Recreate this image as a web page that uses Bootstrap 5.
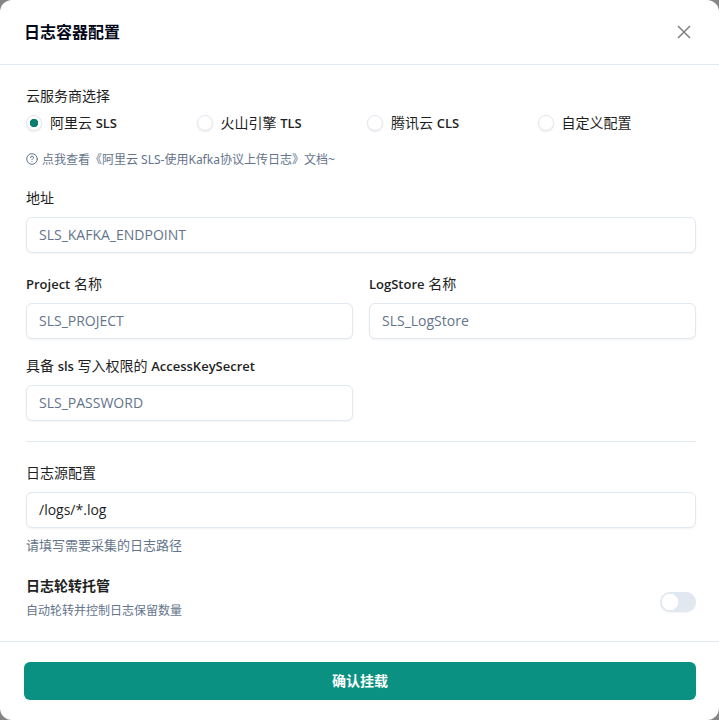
<!DOCTYPE html>
<html lang="zh-CN">
<head>
<meta charset="utf-8">
<meta name="viewport" content="width=device-width, initial-scale=1">
<title>日志容器配置</title>
<link href="https://cdn.jsdelivr.net/npm/bootstrap@5.3.0/dist/css/bootstrap.min.css" rel="stylesheet">
<style>
  :root { --line: #e2e8f0; --muted: #64748b; --brand: #0a9181; }
  body { background: #858585; color: #1f1f1f; font-family: "Noto Sans", "Noto Sans CJK SC", sans-serif; font-size: 14px; line-height: 20px; }
  .dialog-panel { background: #fff; border-radius: 12px; min-height: 100vh; }
  .dialog-head { padding: 20px 23px 20px 24px; border-bottom: 1px solid var(--line); }
  .dialog-title { font-size: 16px; line-height: 24px; color: #020817; }
  .close-btn { width: 24px; height: 24px; color: #808080; }
  .dialog-main { padding: 21px 23px 21px 26px; }
  .dialog-foot { padding: 20px 23px 20px 24px; border-top: 1px solid var(--line); }
  .field-label { display: block; margin-bottom: 9px; line-height: 20px; }
  .latin { font-family: "Open Sans", sans-serif; font-size: 13px; font-weight: 600; }
  .form-control { height: 36px; padding: 0 12px 2px; font-family: "Open Sans", "Noto Sans CJK SC", sans-serif; font-size: 14px; line-height: 20px; color: #1f1f1f; border-color: var(--line); border-radius: 6px; box-shadow: 0 1px 2px rgba(0,0,0,.05); }
  .form-control::placeholder { color: var(--muted); }
  .provider-row { display: grid; grid-template-columns: repeat(4, 1fr); gap: 12px; margin-top: 7px; }
  .form-check-input.provider { width: 16px; height: 16px; margin: 0; border-color: var(--line); background-color: #fff; box-shadow: 0 1px 2px rgba(0,0,0,.08); }
  .form-check-input.provider:checked { background-image: radial-gradient(circle, #0a7d70 0 4px, transparent 4.5px); border-color: var(--line); }
  .doc-link { color: var(--muted); font-size: 12px; line-height: 16px; margin: 19px 0 20px; }
  .doc-link svg { margin-bottom: 2px; }
  .field-grid { display: grid; grid-template-columns: 1fr 1fr; gap: 17px 16px; margin-top: 21px; }
  .divider { margin: 20px 0 21px; border-top: 1px solid var(--line); opacity: 1; }
  .help-text { color: var(--muted); font-size: 13px; line-height: 20px; margin-top: 7px; }
  .rotate-row { margin-top: 21px; }
  .rotate-note { color: var(--muted); font-size: 12px; line-height: 16px; margin-top: 7px; }
  .form-switch .form-check-input { width: 36px; height: 20px; margin: 0; border: 0; background-color: var(--line); background-image: radial-gradient(circle, #fff 0 8px, transparent 8.5px); background-size: 20px 20px; background-position: left center; box-shadow: 0 1px 2px rgba(0,0,0,.05); }
  .form-switch .form-check-input:checked { background-color: var(--brand); background-position: right center; }
  .confirm-btn { --bs-btn-bg: #0a9181; --bs-btn-color: #fff; --bs-btn-hover-bg: #087a6d; --bs-btn-hover-color: #fff; height: 38px; padding: 0; border: 0; border-radius: 6px; font-size: 14px; line-height: 20px; }
</style>
</head>
<body>
<main class="dialog-panel d-flex flex-column">
  <header class="dialog-head d-flex align-items-center justify-content-between">
    <h1 class="dialog-title fw-bold mb-0">日志容器配置</h1>
    <button type="button" class="close-btn btn p-0 border-0 d-flex align-items-center justify-content-center" aria-label="关闭">
      <svg width="14" height="14" viewBox="0 0 14 14" fill="none" stroke="currentColor" stroke-width="1.5" aria-hidden="true"><path d="M1 1l12 12M13 1L1 13"/></svg>
    </button>
  </header>

  <form class="dialog-main flex-grow-1">
    <div id="provider-label">云服务商选择</div>
    <div class="provider-row" role="radiogroup" aria-labelledby="provider-label">
      <div class="d-flex align-items-center gap-2">
        <input class="form-check-input provider" type="radio" name="provider" id="sls" checked>
        <label for="sls">阿里云 <span class="latin">SLS</span></label>
      </div>
      <div class="d-flex align-items-center gap-2">
        <input class="form-check-input provider" type="radio" name="provider" id="tls">
        <label for="tls">火山引擎 <span class="latin">TLS</span></label>
      </div>
      <div class="d-flex align-items-center gap-2">
        <input class="form-check-input provider" type="radio" name="provider" id="cls">
        <label for="cls">腾讯云 <span class="latin">CLS</span></label>
      </div>
      <div class="d-flex align-items-center gap-2">
        <input class="form-check-input provider" type="radio" name="provider" id="custom">
        <label for="custom">自定义配置</label>
      </div>
    </div>

    <a href="#" class="doc-link d-flex align-items-center text-decoration-none gap-1">
      <svg width="12" height="12" viewBox="0 0 12 12" fill="none" stroke="currentColor" stroke-linecap="round" stroke-linejoin="round" aria-hidden="true"><circle cx="6" cy="6" r="5.3"/><path d="M4.5 4.6a1.5 1.5 0 0 1 3 .1c0 1-1.5 1.3-1.5 2M6 8.6v.1"/></svg>
      <span>点我查看《阿里云 SLS-使用Kafka协议上传日志》文档~</span>
    </a>

    <label class="field-label" for="endpoint">地址</label>
    <input class="form-control" id="endpoint" type="text" placeholder="SLS_KAFKA_ENDPOINT">

    <div class="field-grid">
      <div>
        <label class="field-label" for="project"><span class="latin">Project</span> 名称</label>
        <input class="form-control" id="project" type="text" placeholder="SLS_PROJECT">
      </div>
      <div>
        <label class="field-label" for="logstore"><span class="latin">LogStore</span> 名称</label>
        <input class="form-control" id="logstore" type="text" placeholder="SLS_LogStore">
      </div>
      <div>
        <label class="field-label" for="secret">具备 <span class="latin">sls</span> 写入权限的 <span class="latin">AccessKeySecret</span></label>
        <input class="form-control" id="secret" type="text" placeholder="SLS_PASSWORD">
      </div>
    </div>

    <hr class="divider">

    <label class="field-label" for="source">日志源配置</label>
    <input class="form-control" id="source" type="text" value="/logs/*.log" aria-describedby="source-help">
    <div class="help-text" id="source-help">请填写需要采集的日志路径</div>

    <div class="rotate-row d-flex align-items-center justify-content-between">
      <div>
        <label class="fw-bold d-block" for="rotate">日志轮转托管</label>
        <div class="rotate-note" id="rotate-note">自动轮转并控制日志保留数量</div>
      </div>
      <div class="form-switch p-0 d-flex mt-2">
        <input class="form-check-input" type="checkbox" role="switch" id="rotate" aria-describedby="rotate-note">
      </div>
    </div>
  </form>

  <footer class="dialog-foot">
    <button type="button" class="confirm-btn btn w-100 fw-bold">确认挂载</button>
  </footer>
</main>
<script src="https://cdn.jsdelivr.net/npm/bootstrap@5.3.0/dist/js/bootstrap.bundle.min.js"></script>
</body>
</html>
